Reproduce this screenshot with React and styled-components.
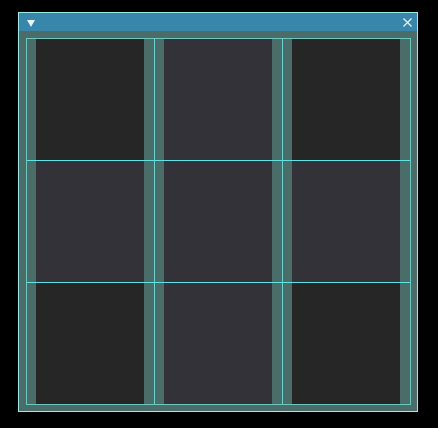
import React from 'react';
import styled, { createGlobalStyle } from 'styled-components';

const GlobalStyle = createGlobalStyle`
  html, body {
    margin: 0;
    padding: 0;
    background: #000;
    font-family: "Liberation Sans", Arial, sans-serif;
  }
`;

const Page = styled.div`
  padding: 12px 0 0 18px;
`;

const Window = styled.div`
  width: 400px;
  height: 400px;
  box-sizing: border-box;
  border: 1px solid #9ceaea;
  background-color: #4a6d6a;
  display: flex;
  flex-direction: column;
`;

const TitleBar = styled.div`
  height: 18px;
  background-color: #3886aa;
  display: flex;
  align-items: center;
  justify-content: space-between;
  padding: 0 5px 0 8px;
  flex-shrink: 0;
`;

const TitleIcon = styled.svg`
  display: block;
  margin-top: ${(p) => p.$nudge || 0}px;
`;

const Body = styled.div`
  padding: 7px;
`;

const Table = styled.div`
  display: grid;
  grid-template-columns: 128px 128px 127px;
  grid-template-rows: 122px 122px 121px;
  border: 1px solid #6cc8c0;
  width: max-content;
`;

const Cell = styled.div`
  box-sizing: border-box;
  padding: 0 10px 0 9px;
  border-right: ${(p) => (p.$lastCol ? 'none' : '1px solid #6ad2d0')};
  border-bottom: ${(p) => (p.$lastRow ? 'none' : '1px solid #5ee4e4')};
  display: flex;
`;

const Fill = styled.div`
  flex: 1;
  background-color: ${(p) => (p.$light ? '#333238' : '#262626')};
`;

const pattern = [
  [false, true, false],
  [true, true, true],
  [false, true, false],
];

function CollapseIcon() {
  return (
    <TitleIcon $nudge={2} width="8" height="7" viewBox="0 0 8 7">
      <polygon points="0,0 8,0 4,7" fill="#e6f4f6" />
    </TitleIcon>
  );
}

function CloseIcon() {
  return (
    <TitleIcon width="9" height="9" viewBox="0 0 9 9">
      <path d="M0.5 0.5 L8.5 8.5 M8.5 0.5 L0.5 8.5" stroke="#e6f4f6" strokeWidth="1.3" />
    </TitleIcon>
  );
}

export default function App() {
  return (
    <Page>
      <GlobalStyle />
      <Window>
        <TitleBar>
          <CollapseIcon />
          <CloseIcon />
        </TitleBar>
        <Body>
          <Table>
            {pattern.map((row, r) =>
              row.map((light, c) => (
                <Cell key={`${r}-${c}`} $lastCol={c === 2} $lastRow={r === 2}>
                  <Fill $light={light} />
                </Cell>
              ))
            )}
          </Table>
        </Body>
      </Window>
    </Page>
  );
}
